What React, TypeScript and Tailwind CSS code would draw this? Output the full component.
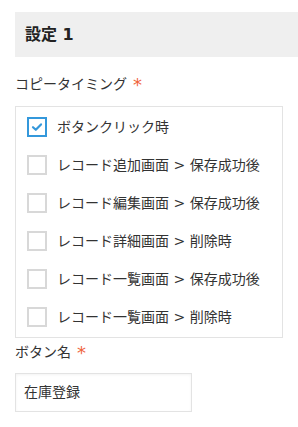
import React from "react";

const items = [
  { label: "ボタンクリック時", checked: true },
  { label: "レコード追加画面 > 保存成功後", checked: false },
  { label: "レコード編集画面 > 保存成功後", checked: false },
  { label: "レコード詳細画面 > 削除時", checked: false },
  { label: "レコード一覧画面 > 保存成功後", checked: false },
  { label: "レコード一覧画面 > 削除時", checked: false },
];

function Req() {
  return (
    <span className="ml-[6px] text-[#f0643c] text-[18px] leading-[20px] relative top-[1px]">*</span>
  );
}

export default function App() {
  return (
    <div
      className="bg-white w-[298px] h-[427px] pl-[15px] pt-[12px] text-[#333333]"
      style={{ fontFamily: '"DejaVu Sans", "Noto Sans CJK JP", sans-serif' }}
    >
      <div className="h-[45px] bg-[#efefef] pl-[10px] flex items-center text-[16px] font-bold text-[#222]">
        設定 1
      </div>
      <div className="mt-[17px] h-[20px] flex items-center text-[14px]">
        コピータイミング
        <Req />
      </div>
      <div className="mt-[12px] w-[268px] border border-[#e3e3e3] px-[11px] py-[10px] flex flex-col gap-[18px]">
        {items.map((it) => (
          <div key={it.label} className="h-[20px] flex items-center text-[14px]">
            {it.checked ? (
              <div className="w-[20px] h-[20px] border-[2px] border-[#3498db] flex items-center justify-center shrink-0">
                <svg width="12" height="10" viewBox="0 0 12 10">
                  <path d="M2 5.2 L4.8 7.8 L10 2.4" fill="none" stroke="#3498db" strokeWidth="2.2" strokeLinecap="round" strokeLinejoin="round" />
                </svg>
              </div>
            ) : (
              <div className="w-[20px] h-[20px] border-[2px] border-[#d8d8d8] shrink-0" />
            )}
            <span className="ml-[10px] whitespace-nowrap">{it.label}</span>
          </div>
        ))}
      </div>
      <div className="mt-[4px] h-[20px] flex items-center text-[14px]">
        ボタン名
        <Req />
      </div>
      <div className="mt-[11px] w-[177px] h-[39px] border border-[#e3e3e3] bg-white shadow-[inset_0_1px_3px_#f3f3f3] pl-[8px] flex items-center text-[14px] text-[#333]">
        在庫登録
      </div>
    </div>
  );
}
